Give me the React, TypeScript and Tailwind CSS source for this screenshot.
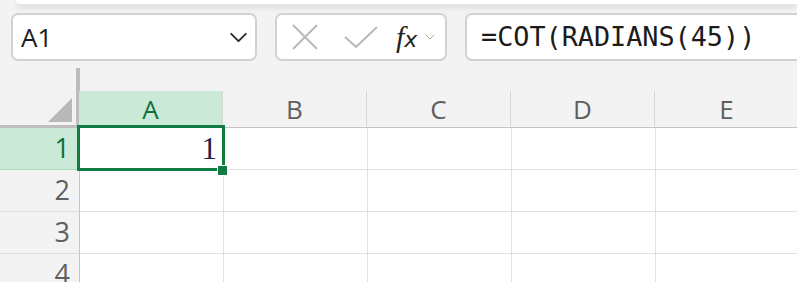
import React from 'react';

const sans = { fontFamily: '"Open Sans", "Noto Sans", sans-serif' };
const cols = ['A', 'B', 'C', 'D', 'E'];
const rows = [1, 2, 3, 4];

const Chevron = ({ className }: { className?: string }) => (
  <svg viewBox="0 0 20 12" className={className} fill="none" stroke="currentColor" strokeWidth="2" strokeLinecap="round" strokeLinejoin="round">
    <path d="M2 2 L10 10 L18 2" />
  </svg>
);

export default function App() {
  return (
    <div className="w-[797px] h-[282px] overflow-hidden bg-[#f3f3f3]" style={sans}>
      {/* ribbon edge */}
      <div className="h-[4px] ml-[16px] bg-white rounded-bl-[8px] shadow-[0_3px_6px_rgba(0,0,0,0.14)]" />

      {/* formula bar */}
      <div className="flex h-[48px] mt-[9px] pl-[11px] gap-[18px]">
        <div className="w-[246px] flex items-center justify-between bg-white border-2 border-[#d2d2d2] rounded-[7px] pl-[8px] pr-[7px]">
          <span className="text-[26px] leading-none text-[#1b1b1b]">A1</span>
          <Chevron className="w-[19px] h-[11px] text-[#2a2a2a]" />
        </div>

        <div className="w-[172px] flex items-center bg-white border-2 border-[#d2d2d2] rounded-[7px]">
          <svg viewBox="0 0 26 26" className="w-[26px] h-[26px] ml-[15px] text-[#b8b8b8]" fill="none" stroke="currentColor" strokeWidth="2">
            <path d="M1 1 L25 25 M25 1 L1 25" />
          </svg>
          <svg viewBox="0 0 34 22" className="w-[34px] h-[22px] ml-[26px] text-[#b8b8b8]" fill="none" stroke="currentColor" strokeWidth="2">
            <path d="M1 11 L12 21 L33 1" />
          </svg>
          <span className="ml-[18px] text-[#222] leading-none italic" style={{ fontFamily: '"Liberation Serif", serif' }}>
            <span className="text-[30px]">f</span>
            <span className="text-[22px]" style={{ fontFamily: '"DejaVu Sans", sans-serif' }}>x</span>
          </span>
          <Chevron className="w-[10px] h-[6px] ml-[8px] text-[#a8a8a8]" />
        </div>

        <div className="flex-1 -mr-[10px] flex items-center bg-white border-2 border-[#d2d2d2] rounded-[7px] pl-[14px]">
          <span className="text-[26.8px] leading-none text-[#1b1b1b]" style={{ fontFamily: '"DejaVu Sans Mono", monospace' }}>
            =COT(RADIANS(45))
          </span>
        </div>
      </div>

      {/* grid */}
      <div className="mt-[7px]">
        <div className="flex">
          <div className="w-[80px] h-[60px] shrink-0 border-r-4 border-b-[3px] border-[#bdbdbd] flex items-end justify-end pr-[4px] pb-[3px]">
            <div className="w-[24px] h-[24px] bg-[#b8b8b8] [clip-path:polygon(100%_0,100%_100%,0_100%)]" />
          </div>
          <div className="flex flex-col">
            <div className="h-[23px]" />
            <div className="flex h-[37px] border-b border-[#c4c4c4] -ml-[1px]">
              {cols.map((c, i) => (
                <div
                  key={c}
                  className={
                    i === 0
                      ? 'w-[144px] shrink-0 flex items-center justify-center border-r border-[#d6d6d6] bg-[#caead7] text-[#0e703b] text-[26px]'
                      : 'w-[144px] shrink-0 flex items-center justify-center border-r border-[#d6d6d6] text-[#5f5f5f] text-[26px]'
                  }
                >
                  {c}
                </div>
              ))}
            </div>
          </div>
        </div>

        {rows.map((r) => (
          <div key={r} className="flex h-[42px]">
            <div
              className={
                r === 1
                  ? 'w-[80px] shrink-0 flex items-center justify-end pr-[9px] border-r border-b border-r-[#c6c6c6] border-b-[#a6d8ba] bg-[#caead7] text-[#0e703b] text-[27px]'
                  : 'w-[80px] shrink-0 flex items-center justify-end pr-[9px] border-r border-b border-r-[#c6c6c6] border-b-[#dcdcdc] text-[#5f5f5f] text-[27px]'
              }
            >
              {r}
            </div>
            {cols.map((c, i) => (
              <div key={c} className="relative w-[144px] shrink-0 bg-white border-r border-b border-[#e1e1e1] flex items-center justify-end pr-[6px]">
                {r === 1 && i === 0 && (
                  <>
                    <span className="text-[31px] leading-none text-[#24244a]" style={{ fontFamily: '"Liberation Serif", serif' }}>1</span>
                    <div className="absolute z-10 -left-[3px] -top-[3px] -right-[2px] -bottom-[2px] border-3 border-solid border-[#107c41]" />
                    <div className="absolute z-20 -right-[5px] -bottom-[7px] w-[11px] h-[11px] bg-[#107c41] border border-solid border-white" />
                  </>
                )}
              </div>
            ))}
          </div>
        ))}
      </div>
    </div>
  );
}
